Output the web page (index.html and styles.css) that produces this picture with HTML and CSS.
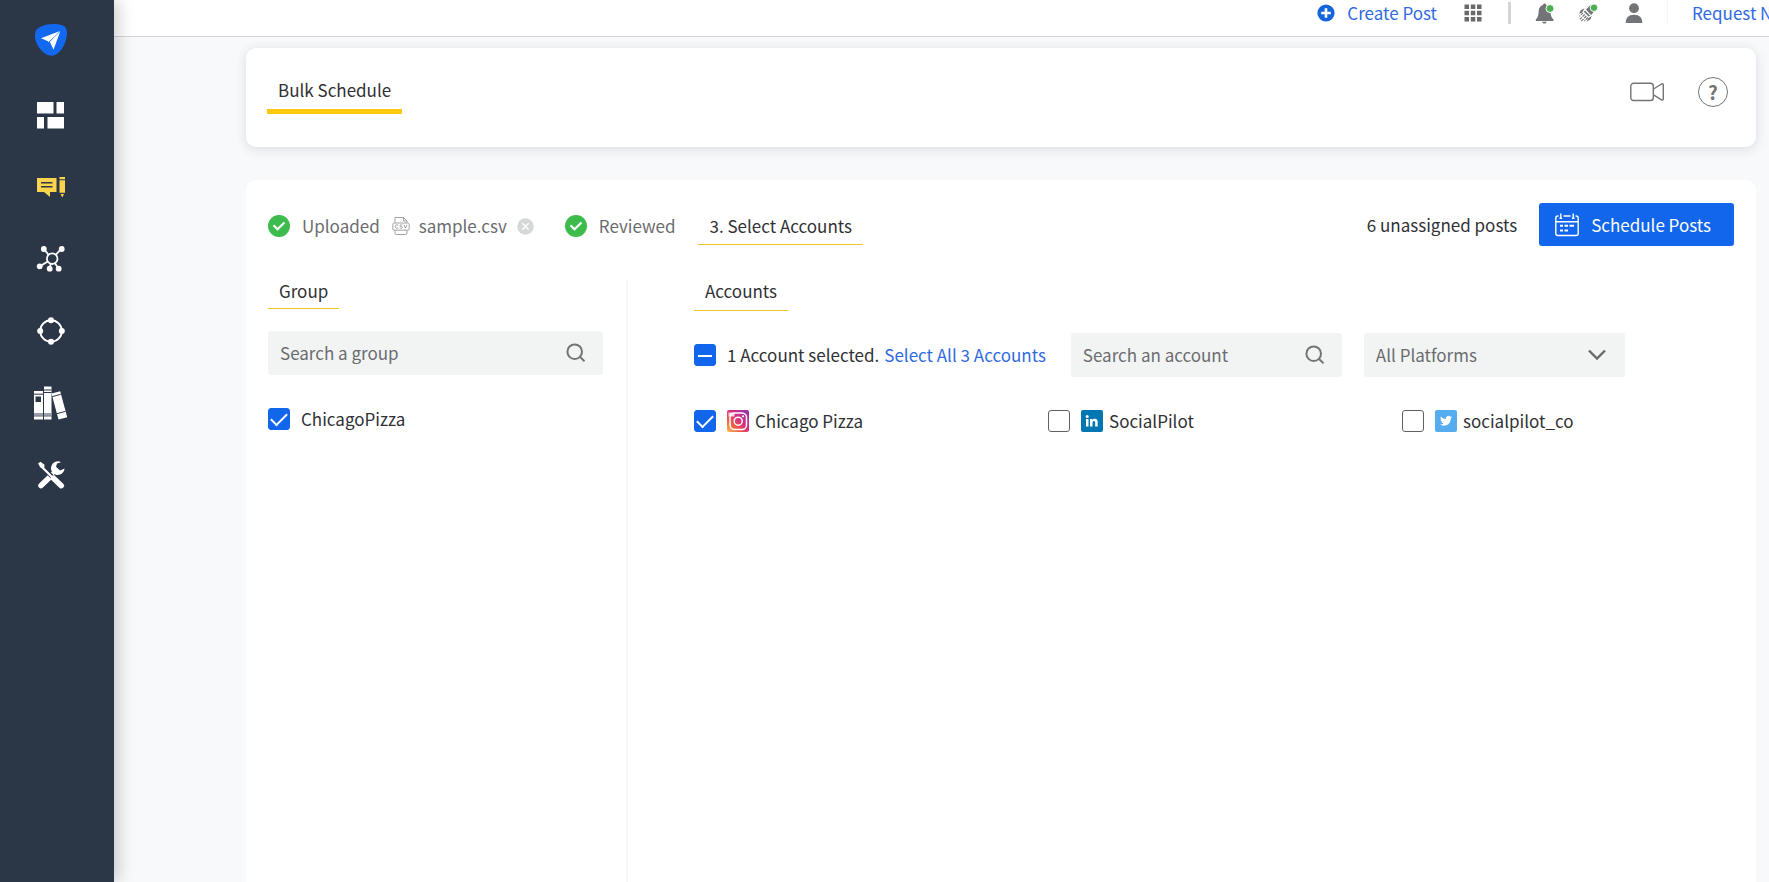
FILE: index.html
```html
<!DOCTYPE html>
<html lang="en">
<head>
<meta charset="utf-8">
<meta name="viewport" content="width=device-width, initial-scale=1">
<title>Bulk Schedule</title>
<link rel="stylesheet" href="styles.css">
</head>
<body>
<div class="app">
  <nav class="sidebar" aria-label="Main">
    <a class="logo" href="#" aria-label="Home">
      <svg width="34" height="32" viewBox="0 0 34 32"><path d="M7 2.500C13-.5 24-.8 30 2c3 2 3.500 6 2.600 11C31 22 26 29 21 31c-4 1.500-9 .5-13-4C3 22 .5 16 1 10c.3-4 2.500-6 6-7.500z" fill="#1268ee"/><path d="M26 7 7 14.200l7.500 3.200z" fill="#fff"/><path d="M26.300 7.200 15.800 17.800l3.700 8z" fill="#fff"/><path d="M25 8.500 14 16.500v1.700z" fill="#fff"/></svg>
    </a>
    <a href="#" aria-label="Dashboard">
      <svg width="28" height="28" viewBox="0 0 28 28" fill="#fff"><path d="M0 1h16.500v11.500H0zM19.500 1H27v11.500h-7.500zM0 16h7v11.500H0zM10.500 16H27v11.500H10.500z"/></svg>
    </a>
    <a href="#" aria-label="Posts" aria-current="page">
      <svg width="30" height="22" viewBox="0 0 30 22"><path d="M1 2h19.500v14H14v5l-6-5H1z" fill="#fcd34d"/><path d="M5 6.700h11.500M5 10.700h11.500" stroke="#2b3647" stroke-width="1.600"/><path d="M23.500 1H29v2.200h-5.500zM23.500 4.300H29v12.500h-5.500zM24.500 18h3.500l-1.700 3.500z" fill="#fcd34d"/></svg>
    </a>
    <a href="#" aria-label="Accounts">
      <svg width="30" height="28" viewBox="0 0 30 28"><path d="M7.500 3.500 16 14l9.500-10.500M3.500 21.500 16 14l-2.500 9.500M16 14l6.500 9.500" stroke="#fff" stroke-width="1.800" fill="none"/><circle cx="16.200" cy="13.700" r="5.300" fill="#2b3647" stroke="#fff" stroke-width="1.800"/><g fill="#fff"><circle cx="7.800" cy="4" r="2.900"/><circle cx="25.700" cy="4" r="2.900"/><circle cx="3.700" cy="21.300" r="2.900"/><circle cx="13.700" cy="23.700" r="2.900"/><circle cx="22.700" cy="23.700" r="2.900"/></g></svg>
    </a>
    <a href="#" aria-label="Connections">
      <svg width="28" height="28" viewBox="0 0 28 28"><circle cx="14" cy="14" r="10.800" fill="none" stroke="#fff" stroke-width="1.900"/><g fill="#fff"><circle cx="14" cy="3.200" r="3"/><circle cx="24.800" cy="14" r="3"/><circle cx="14" cy="24.800" r="3"/><circle cx="3.200" cy="14" r="3"/></g></svg>
    </a>
    <a href="#" aria-label="Library">
      <svg width="34" height="34" viewBox="0 0 34 34"><g fill="#fff"><path d="M0 5h9v28.500H0zM10 .5h7.500v33H10z"/><path d="m17.500 7.500 8.700-2.300 7 26-8.700 2.300z"/></g><path d="M0 8.200h9M10 4h7.500M10 6.500h7.500M18 10.700l8.800-2.400M22.800 27.700l8.800-2.400" stroke="#2b3647" stroke-width="1"/><path d="M0 27h9v2.500H0zM10 27h7.500v2.500H10z" fill="#9ba1aa"/><path d="M0 30h9M10 30h7.500" stroke="#2b3647" stroke-width=".8"/><path d="M1.500 10.500H7V16H1.500z" fill="#2b3647"/></svg>
    </a>
    <a href="#" aria-label="Tools">
      <svg width="28" height="28" viewBox="0 0 28 28"><path d="M14.500 14.500 4 24.500" stroke="#fff" stroke-width="5.500" stroke-linecap="round"/><path d="m20.500 7.500-6 6" stroke="#fff" stroke-width="3.500"/><path d="M24 1.200A6.800 6.800 0 1 0 27.600 7.500L23 9.500l-4-3.500 1-3.500z" fill="#fff"/><path d="m3 3.500 13 13" stroke="#2b3647" stroke-width="4.500"/><path d="m3 4 13 13" stroke="#fff" stroke-width="2.200"/><path d="M1 2.500 3.500.8l4 3-.3 3.500-3.500-.5z" fill="#fff"/><path d="m16.500 17.200 7.800 7.500" stroke="#fff" stroke-width="5.500" stroke-linecap="round"/></svg>
    </a>
  </nav>
  <div class="main">
    <header class="topbar">
      <a class="create" href="#">
        <svg width="18" height="18" viewBox="0 0 18 18"><circle cx="9" cy="9" r="8.600" fill="#1464dc"/><path d="M9 4.200v9.600M4.200 9h9.600" stroke="#fff" stroke-width="2.600"/></svg>
        Create Post
      </a>
      <button class="icon-button apps" aria-label="Apps">
        <svg width="18" height="18" viewBox="0 0 18 18" fill="#68696b"><path d="M.5.500h4.500V5H.5zM6.800.5h4.500V5H6.800zM13 .5h4.500V5H13zM.5 6.800h4.500v4.500H.5zM6.800 6.800h4.500v4.500H6.800zM13 6.800h4.500v4.500H13zM.5 13h4.500v4.500H.5zM6.800 13h4.500v4.500H6.800zM13 13h4.500v4.500H13z"/></svg>
      </button>
      <span class="rule"></span>
      <button class="icon-button bell" aria-label="Notifications">
        <svg width="20" height="22" viewBox="0 0 20 22"><path d="M9.500 1.500c1 0 1.500.7 1.500 1.500 3 .8 4.500 3 4.500 6 0 4 .8 6.500 3 8.500v1.500H.8v-1.500c2-2 2.900-4.500 2.900-8.500 0-3 1.500-5.200 4.300-6 0-.8.500-1.500 1.500-1.500zM7 19.700h4.800C11.300 21 10.500 21.500 9.500 21.500S7.500 21 7 19.700z" fill="#737477"/><circle cx="15" cy="6.500" r="4" fill="#4caf50" stroke="#fff"/></svg>
      </button>
      <button class="icon-button rocket" aria-label="What's new">
        <svg width="20" height="20" viewBox="0 0 20 20"><path d="M8 6.500 11.500 3C13.500 1.500 16 1 18.500 1c0 3-.5 5.300-2 7.300L13 12zM7 7.500l5 5-1.200 1.200-5-5zM6.500 5.500 3 7l-2 3.500 3-.8zM13.800 13l-1.500 3.500-3.300 2 .8-3z" fill="#737477"/><path d="m5 9.800-3.500 3.500M6.700 11.500l-5.200 5.200M8.300 13l-5 5.200M9.800 14.500l-3.500 3.700" stroke="#737477" stroke-width="1.200" stroke-dasharray="3 1"/><circle cx="16" cy="4.700" r="3.800" fill="#4caf50" stroke="#fff"/></svg>
      </button>
      <button class="icon-button user" aria-label="Profile">
        <svg width="18" height="20" viewBox="0 0 18 20" fill="#737477"><circle cx="9" cy="5.200" r="4.900"/><path d="M.7 20c0-5.500 3-8.300 8.300-8.300s8.300 2.800 8.300 8.300z"/></svg>
      </button>
      <a class="request" href="#">Request N</a>
    </header>
    <main class="content">
      <section class="card title-card">
        <h1 class="page-tab">Bulk Schedule</h1>
        <div class="help">
          <button class="icon-button" aria-label="Video tutorial">
            <svg width="34" height="20" viewBox="0 0 34 20" fill="none" stroke="#737477" stroke-width="1.400"><rect x=".8" y="1.300" width="22.500" height="17.200" rx="2.800"/><path d="m23.500 7 8-5c1-.5 1.800-.2 1.800.8v14.200c0 1-.8 1.300-1.800.8l-8-5"/></svg>
          </button>
          <button class="icon-button question" aria-label="Help">?</button>
        </div>
      </section>
      <section class="card schedule-card">
        <div class="steps-bar">
          <ol class="steps">
            <li class="done">
              <svg width="22" height="22" viewBox="0 0 22 22"><circle cx="11" cy="11" r="11" fill="#3dbb4c"/><path d="m5.500 10.300 4 4L16.500 7.500" fill="none" stroke="#fff" stroke-width="2.200"/></svg>
              Uploaded
            </li>
            <li class="file">
              <svg class="csv" width="18" height="18" viewBox="0 0 18 18" fill="none" stroke="#8a8b8d" stroke-width=".8"><path d="M3 5.500v-5h8.500l3.500 3.500v1.500M11.500.5V4H15M3 13.500v2.500c0 1 .3 1.500 1.200 1.500h9.600c.9 0 1.200-.5 1.200-1.500v-2.500"/><rect x=".8" y="6" width="16.400" height="7.200" rx="1.500"/><path d="M6.200 8.200C4.500 7.300 3.200 8 3.200 9.500s1.300 2.300 3 1.500M10.300 8.100C8.700 7.500 7.500 8 8 9c.4.700 2.300.4 2.300 1.400 0 .9-1.300 1.100-2.700.6M12 7.800l1.500 3.400L15 7.800"/></svg>
              sample.csv
              <button class="icon-button remove" aria-label="Remove file"><svg width="17" height="17" viewBox="0 0 17 17"><circle cx="8.500" cy="8.500" r="8.200" fill="#d6d7d9"/><path d="m5.300 5.300 6.400 6.400m0-6.400-6.400 6.400" stroke="#fff" stroke-width="1.500"/></svg></button>
            </li>
            <li class="done">
              <svg width="22" height="22" viewBox="0 0 22 22"><circle cx="11" cy="11" r="11" fill="#3dbb4c"/><path d="m5.500 10.300 4 4L16.500 7.500" fill="none" stroke="#fff" stroke-width="2.200"/></svg>
              Reviewed
            </li>
            <li class="tab current">3. Select Accounts</li>
          </ol>
          <div class="actions">
            <span>6 unassigned posts</span>
            <button class="schedule">
              <svg width="24" height="24" viewBox="0 0 24 24" fill="none" stroke="#fff" stroke-width="1.400"><path d="M3.500 3H3C1.500 3 .8 3.700.8 5v15.500c0 1.300.7 2 2.200 2h18c1.500 0 2.200-.7 2.200-2V5c0-1.300-.7-2-2.200-2h-.5M8.500 3h7M.8 8.800h22.400M5.800.5v4.700M4.500 5.200h2.600M18.200.5v4.700M16.900 5.200h2.600"/><path d="M5 12.700h3M9.500 12.700h3.500M14.500 12.700h4.500M5 17.500h3M9.500 17.500h3.500" stroke-width="2"/></svg>
              Schedule Posts
            </button>
          </div>
        </div>
        <div class="columns">
          <div class="groups">
            <h2 class="tab">Group</h2>
            <div class="field">
              <input type="search" placeholder="Search a group" aria-label="Search a group">
              <svg width="20" height="20" viewBox="0 0 20 20" fill="none" stroke="#737477" stroke-width="2"><circle cx="8.700" cy="8.700" r="7.300"/><path d="m13.800 13.800 4.700 4.400"/></svg>
            </div>
            <label class="choice"><input type="checkbox" checked>ChicagoPizza</label>
          </div>
          <div class="accounts">
            <h2 class="tab">Accounts</h2>
            <div class="filters">
              <div class="selection">
                <label class="choice"><input type="checkbox" class="partial" checked>1 Account selected.</label>
                <a href="#">Select All 3 Accounts</a>
              </div>
              <div class="field account-search">
                <input type="search" placeholder="Search an account" aria-label="Search an account">
                <svg width="20" height="20" viewBox="0 0 20 20" fill="none" stroke="#737477" stroke-width="2"><circle cx="8.700" cy="8.700" r="7.300"/><path d="m13.800 13.800 4.700 4.400"/></svg>
              </div>
              <div class="field platform">
                <select aria-label="Platform"><option>All Platforms</option></select>
                <svg width="18" height="12" viewBox="0 0 18 12" fill="none" stroke="#68696b" stroke-width="2.400"><path d="m1 1.500 8 8 8-8"/></svg>
              </div>
            </div>
            <div class="account-list">
              <label class="choice"><input type="checkbox" checked>
                <svg width="22" height="22" viewBox="0 0 22 22"><defs><linearGradient id="ig" x1="0" y1="1" x2="1" y2="0"><stop offset="0" stop-color="#fec053"/><stop offset=".28" stop-color="#f2603f"/><stop offset=".55" stop-color="#d92e7f"/><stop offset="1" stop-color="#8c35b0"/></linearGradient></defs><rect width="22" height="22" rx="2" fill="url(#ig)"/><g fill="none" stroke="#fff" stroke-width="1.500"><rect x="3" y="3" width="16.500" height="16.500" rx="4.500"/><circle cx="11.200" cy="11.200" r="4"/></g><circle cx="16" cy="6.300" r="1.100" fill="#fff"/><path d="M1.500 2.500h6v4h-6z" fill="#fff" opacity=".8"/></svg>
                Chicago Pizza</label>
              <label class="choice"><input type="checkbox">
                <svg width="22" height="22" viewBox="0 0 22 22"><rect width="22" height="22" rx="2" fill="#0077b0"/><g fill="#fff"><circle cx="6.200" cy="6.500" r="1.500"/><path d="M5 9h2.500v7.500H5zM9 9h2.300v1.100c.5-.9 1.400-1.300 2.500-1.300 2.200 0 2.900 1.300 2.900 3.500v4.200h-2.500v-3.800c0-1.100-.3-1.800-1.200-1.800-1 0-1.500.7-1.500 1.800v3.800H9z"/></g></svg>
                SocialPilot</label>
              <label class="choice"><input type="checkbox">
                <svg width="22" height="22" viewBox="0 0 22 22"><rect width="22" height="22" rx="2" fill="#55acee"/><path transform="translate(5 4.800) scale(.5)" fill="#fff" d="M23.950 4.570a10 10 0 0 1-2.820.77 4.960 4.960 0 0 0 2.160-2.720c-.95.55-2 .95-3.130 1.180a4.920 4.920 0 0 0-8.380 4.480C7.690 8.100 4.070 6.130 1.640 3.160a4.920 4.920 0 0 0 1.520 6.570 4.900 4.900 0 0 1-2.230-.61v.06a4.920 4.920 0 0 0 3.950 4.830 5 5 0 0 1-2.210.08 4.940 4.940 0 0 0 4.600 3.420A9.870 9.870 0 0 1 0 19.540a14 14 0 0 0 7.550 2.210c9.050 0 14-7.500 14-13.980 0-.21 0-.42-.02-.63a9.940 9.940 0 0 0 2.460-2.550z"/></svg>
                socialpilot_co</label>
            </div>
          </div>
        </div>
      </section>
    </main>
  </div>
</div>
</body>
</html>
```

FILE: styles.css
```css
* { box-sizing: border-box; }
body {
  margin: 0;
  font: 17px/24px "Noto Sans CJK SC", "Noto Sans", sans-serif;
  color: #303135;
  background: #f8f9fb;
  overflow: hidden;
}
h1, h2, ol { margin: 0; padding: 0; font: inherit; }
svg { display: block; flex: none; }
a { color: #2f6ae0; text-decoration: none; }
button, input, select { font: inherit; color: inherit; }
button { border: 0; padding: 0; cursor: pointer; }
.icon-button { background: none; }

.app { display: flex; height: 100vh; }
.sidebar {
  flex: none;
  width: 114px;
  padding: 23px 12px 0 0;
  display: flex;
  flex-direction: column;
  align-items: center;
  background: #2b3647;
  box-shadow: 4px 0 16px rgba(0, 0, 0, 0.2);
  z-index: 1;
}
.sidebar a {
  height: 72px;
  display: flex;
  align-items: center;
}
.sidebar .logo { height: 33px; margin: 0 0 23px; }

.main {
  flex: 1;
  min-width: 0;
  display: flex;
  flex-direction: column;
}
.topbar {
  display: flex;
  flex: none;
  justify-content: flex-end;
  align-items: center;
  height: 37px;
  padding-bottom: 11px;
  background: #fff;
  border-bottom: 1px solid #d3d5d8;
  overflow: hidden;
}
.create { display: flex; align-items: center; gap: 12px; }
.apps { margin-left: 27px; }
.rule { width: 3px; height: 22px; margin: 0 24px 0 26px; background: #d5d5d5; }
.rocket { margin-left: 23px; }
.user { margin-left: 27px; }
.request {
  width: 102px;
  margin-left: 24px;
  padding: 1px 0 0 24px;
  overflow: hidden;
  white-space: nowrap;
  border-left: 1px solid #f6f6f6;
}

.content {
  flex: 1;
  display: flex;
  flex-direction: column;
  padding: 11px 13px 0 132px;
}
.card { background: #fff; }
.title-card {
  display: flex;
  justify-content: space-between;
  padding: 29px 28px 33px 21px;
  border-radius: 10px;
  box-shadow: 0 2px 12px rgba(30, 40, 60, 0.14);
}
.page-tab { padding: 1px 11px 7px; border-bottom: 5px solid #fcc910; }
.help { display: flex; align-items: center; align-self: flex-start; gap: 34px; }
.question {
  width: 30px;
  height: 30px;
  border: 1px solid #737477;
  border-radius: 50%;
  color: #737477;
  font-size: 19px;
  font-weight: bold;
}

.schedule-card {
  flex: 1;
  display: flex;
  flex-direction: column;
  margin-top: 33px;
  padding: 23px 0 0 22px;
  border-radius: 10px 10px 0 0;
}
.steps-bar { display: flex; justify-content: space-between; padding-right: 22px; }
.steps { display: flex; align-items: flex-start; padding-top: 11px; list-style: none; color: #6b6c70; }
.steps .done, .steps .file { display: flex; align-items: center; gap: 12px; }
.steps .file { gap: 9px; margin: 0 31px 0 12px; }
.remove { margin-left: 1px; }
.tab { width: max-content; padding: 0 11px 5px; border-bottom: 1px solid #ecc62a; }
.steps .current { margin-left: 23px; padding-bottom: 6px; color: #303135; }
.actions { display: flex; align-items: center; gap: 22px; }
.schedule {
  display: flex;
  align-items: center;
  gap: 12px;
  height: 43px;
  padding: 0 23px 0 16px;
  border-radius: 3px;
  background: #1266eb;
  color: #fff;
}

.columns { flex: 1; display: flex; margin-top: 33px; }
.groups { width: 360px; padding-right: 23px; border-right: 2px solid #f8f8f8; }
.accounts { flex: 1; min-width: 0; padding-left: 66px; }
.accounts .tab { padding-bottom: 7px; }
.field {
  display: flex;
  align-items: center;
  height: 44px;
  padding: 0 17px 0 12px;
  border-radius: 3px;
  background: #f2f4f4;
  color: #6b6c70;
}
.field input, .field select {
  flex: 1;
  min-width: 0;
  width: 100%;
  padding: 0;
  border: 0;
  outline: 0;
  background: none;
  appearance: none;
}
.field input::placeholder { color: #6b6c70; opacity: 1; }
.groups .field { margin: 22px 0 33px; }
.filters { display: flex; align-items: center; gap: 22px; margin: 22px 0 33px; }
.selection { display: flex; align-items: center; gap: 5px; padding-right: 3px; white-space: nowrap; }
.account-search { width: 271px; }
.platform { width: 261px; padding-right: 19px; }
.choice { display: flex; align-items: center; height: 22px; }
.choice input {
  flex: none;
  display: grid;
  place-items: center;
  width: 22px;
  height: 22px;
  margin: 0 11px 0 0;
  border: 1px solid #5f6062;
  border-radius: 3px;
  background: #fff;
  appearance: none;
}
.choice input:checked { border-color: #1266eb; background: #1266eb; }
.choice input:checked::before {
  content: "";
  width: 14px;
  height: 7px;
  margin-bottom: 3px;
  border: solid #fff;
  border-width: 0 0 2px 2px;
  transform: rotate(-45deg);
}
.choice input.partial:checked::before { height: 2px; margin: 0; border-width: 0 0 2px; transform: none; }
.choice svg { margin-right: 6px; }
.account-list { display: grid; grid-template-columns: repeat(3, 1fr); }
```
